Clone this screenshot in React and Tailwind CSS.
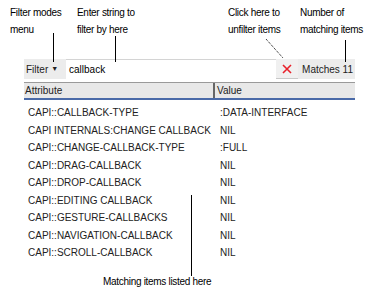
const rows = [
  ['CAPI::CALLBACK-TYPE', ':DATA-INTERFACE'],
  ['CAPI INTERNALS:CHANGE CALLBACK', 'NIL'],
  ['CAPI::CHANGE-CALLBACK-TYPE', ':FULL'],
  ['CAPI::DRAG-CALLBACK', 'NIL'],
  ['CAPI::DROP-CALLBACK', 'NIL'],
  ['CAPI::EDITING CALLBACK', 'NIL'],
  ['CAPI::GESTURE-CALLBACKS', 'NIL'],
  ['CAPI::NAVIGATION-CALLBACK', 'NIL'],
  ['CAPI::SCROLL-CALLBACK', 'NIL'],
];

export default function App() {
  return (
    <div
      className="relative w-[379px] h-[295px] bg-white text-black overflow-hidden"
      style={{ fontFamily: '"Liberation Sans", Arial, sans-serif' }}
    >
      {/* Annotations */}
      <div className="flex h-[59px] text-[10px] leading-[17px] tracking-[-0.3px]">
        <div className="ml-[10px] mt-[4px] w-[60px]">
          Filter modes
          <br />
          menu
        </div>
        <div className="ml-[7px] mt-[4px] w-[100px]">
          Enter string to
          <br />
          filter by here
        </div>
        <div className="ml-[51px] mt-[4px] w-[70px]">
          Click here to
          <br />
          unfilter items
        </div>
        <div className="ml-[2px] mt-[4px]">
          Number of
          <br />
          matching items
        </div>
      </div>

      {/* Toolbar */}
      <div className="mx-[24px] flex h-[20px] bg-[#ececec] text-[10px]">
        <div className="flex w-[42px] items-center pl-[2px] text-[#222]">
          Filter
          <span className="ml-[3px] text-[7px]">▼</span>
        </div>
        <div className="flex flex-1 items-center border-t border-[#d4d4d4] bg-white pl-[3px]">
          callback
        </div>
        <div className="flex w-[22px] items-center justify-center border-b border-[#c8c8c8] bg-[#f0f0f0]">
          <svg width="10" height="10" viewBox="0 0 10 10">
            <path d="M1 1 L9 9 M9 1 L1 9" stroke="#e8202a" strokeWidth="1.6" />
          </svg>
        </div>
        <div className="flex items-center pl-[4px] pr-[2px] text-[#222]">Matches 11</div>
      </div>

      {/* List */}
      <div className="mx-[24px] mt-[3px] border-t border-[#9a9a9a]">
        <div className="flex h-[17px] border-b-2 border-[#4a6aa8] bg-[#e8e8e8] text-[10px] leading-[15px] text-[#222]">
          <div className="w-[191px] border-r-2 border-[#666] pl-[1px]">Attribute</div>
          <div className="pl-[2px]">Value</div>
        </div>
        <div className="pt-[4px] text-[10px] text-[#222]">
          {rows.map(([a, v]) => (
            <div key={a} className="flex h-[17.5px] items-center">
              <div className="w-[193px] overflow-hidden whitespace-nowrap pl-[4px]">{a}</div>
              <div className="pl-[3px]">{v}</div>
            </div>
          ))}
        </div>
      </div>

      <div className="absolute left-[103px] top-[274px] text-[10px] tracking-[-0.3px]">
        Matching items listed here
      </div>

      {/* Pointer lines */}
      <div className="absolute left-[53px] top-[33px] h-[29px] w-px bg-black" />
      <div className="absolute left-[115px] top-[36px] h-[26px] w-px bg-black" />
      <div className="absolute left-[345px] top-[40px] h-[22px] w-px bg-black" />
      <div className="absolute left-[191px] top-[195px] h-[81px] w-px bg-black" />
      <svg className="absolute left-[265px] top-[38px]" width="22" height="22">
        <path d="M1 1 L18 20" stroke="black" strokeWidth="1" strokeDasharray="1 1" />
      </svg>
    </div>
  );
}
